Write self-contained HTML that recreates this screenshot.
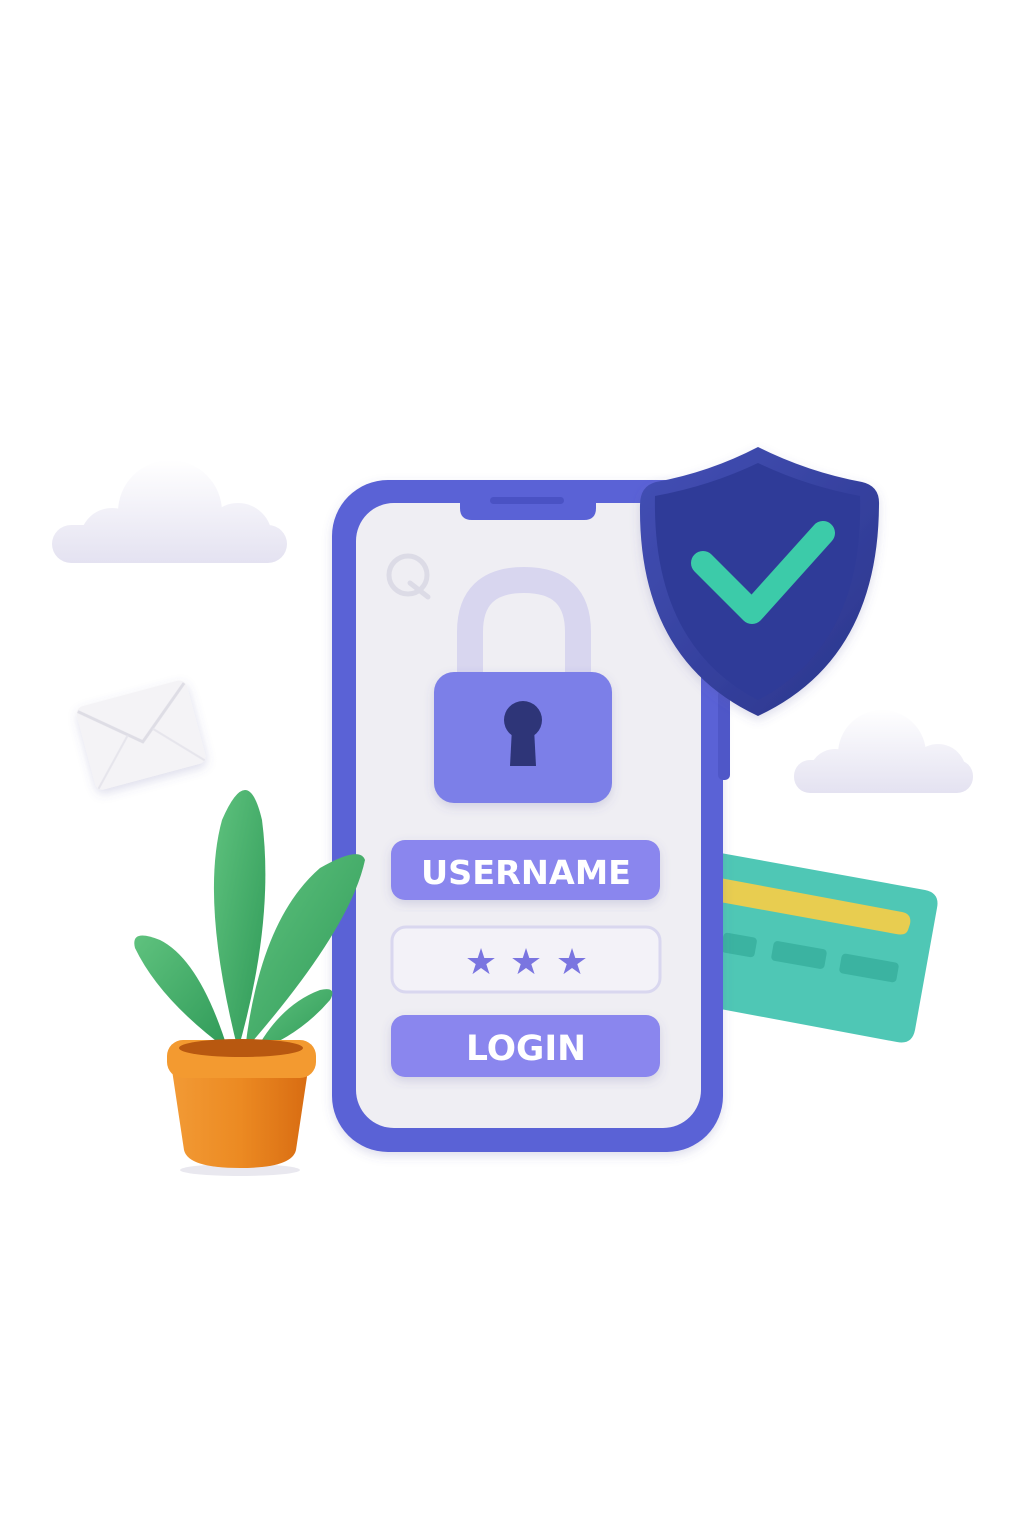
<!DOCTYPE html>
<html><head><meta charset="utf-8"><style>
html,body{margin:0;padding:0;background:#fff;width:1024px;height:1536px;overflow:hidden}
svg{display:block}
</style></head><body>
<svg width="1024" height="1536" viewBox="0 0 1024 1536" xmlns="http://www.w3.org/2000/svg">
<defs>
<linearGradient id="cl1" gradientUnits="userSpaceOnUse" x1="0" y1="460" x2="0" y2="563"><stop offset="0" stop-color="#ffffff"/><stop offset="1" stop-color="#e4e2f1"/></linearGradient>
<linearGradient id="cl2" gradientUnits="userSpaceOnUse" x1="0" y1="708" x2="0" y2="793"><stop offset="0" stop-color="#ffffff"/><stop offset="1" stop-color="#e4e2f1"/></linearGradient>
<clipPath id="c1"><rect x="0" y="0" width="1024" height="563"/></clipPath>
<clipPath id="c2"><rect x="0" y="0" width="1024" height="793"/></clipPath>
<linearGradient id="sh" x1="0" y1="0" x2="1" y2="1"><stop offset="0" stop-color="#4450b6"/><stop offset="1" stop-color="#29348a"/></linearGradient>
<linearGradient id="pot" x1="0" y1="0" x2="1" y2="0"><stop offset="0" stop-color="#f29a35"/><stop offset="0.5" stop-color="#ec8a22"/><stop offset="1" stop-color="#d86c12"/></linearGradient>
<linearGradient id="lf" x1="0" y1="0" x2="1" y2="1"><stop offset="0" stop-color="#5fc27e"/><stop offset="1" stop-color="#2f9a58"/></linearGradient>
<filter id="ds" x="-20%" y="-20%" width="140%" height="140%"><feDropShadow dx="0" dy="4" stdDeviation="5" flood-color="#5a5aa0" flood-opacity="0.2"/></filter>
</defs>

<!-- clouds -->
<g fill="url(#cl1)" clip-path="url(#c1)">
<circle cx="170" cy="512" r="52"/>
<circle cx="112" cy="540" r="32"/>
<circle cx="238" cy="537" r="34"/>
<rect x="52" y="525" width="235" height="38" rx="19"/>
</g>
<g fill="url(#cl2)" clip-path="url(#c2)">
<circle cx="882" cy="754" r="44"/>
<circle cx="835" cy="775" r="26"/>
<circle cx="938" cy="772" r="28"/>
<rect x="794" y="760" width="179" height="33" rx="16"/>
</g>

<!-- envelope -->
<g transform="rotate(-15 141 735)" filter="url(#ds)">
<rect x="84" y="692" width="114" height="86" rx="8" fill="#f4f3f6"/>
<path d="M86 696 L141 742 L196 696" fill="none" stroke="#dedde5" stroke-width="3"/>
<path d="M86 776 L128 732 M196 776 L154 732" fill="none" stroke="#e6e5ec" stroke-width="2"/>
</g>

<!-- card -->
<path d="M715 852 L925 890 Q940 893 937 908 L915 1030 Q912 1045 897 1042 L715 1008 Z" fill="#4fc7b5"/>
<path d="M720 878 L902 912 Q912 914 910 924 L908 930 Q906 936 896 934 L720 902 Z" fill="#e8cd50"/>
<rect x="772" y="945" width="54" height="20" rx="4" transform="rotate(10 799 955)" fill="#3bb3a1"/>
<rect x="840" y="958" width="58" height="20" rx="4" transform="rotate(10 869 968)" fill="#3bb3a1"/>
<rect x="722" y="935" width="34" height="20" rx="4" transform="rotate(10 739 945)" fill="#3bb3a1"/>

<!-- phone -->
<rect x="332" y="480" width="391" height="672" rx="56" fill="#5a62d6" filter="url(#ds)"/>
<rect x="718" y="690" width="12" height="90" rx="5" fill="#4f57c8"/>
<rect x="356" y="503" width="345" height="625" rx="38" fill="#efeef3"/>
<path d="M460 503 L596 503 L596 508 Q596 520 584 520 L472 520 Q460 520 460 508 Z" fill="#5a62d6"/>
<rect x="490" y="497" width="74" height="7" rx="3.5" fill="#4a52c4"/>

<!-- Q logo -->
<circle cx="408" cy="575" r="19" fill="none" stroke="#dcdbe6" stroke-width="5"/>
<path d="M410 583 L428 597" stroke="#dcdbe6" stroke-width="5" stroke-linecap="round"/>

<!-- lock -->
<path d="M470 690 L470 632 Q470 580 524 580 Q578 580 578 632 L578 690" fill="none" stroke="#d8d6ef" stroke-width="26"/>
<rect x="434" y="672" width="178" height="131" rx="20" fill="#7c7fe8" filter="url(#ds)"/>
<circle cx="523" cy="720" r="19" fill="#2e3578"/>
<path d="M512 728 L534 728 L536 766 L510 766 Z" fill="#2e3578"/>

<!-- buttons -->
<rect x="391" y="840" width="269" height="60" rx="14" fill="#8a86ee" filter="url(#ds)"/>
<text x="526" y="884" text-anchor="middle" font-family="DejaVu Sans, sans-serif" font-weight="bold" font-size="33" fill="#fff" textLength="210" lengthAdjust="spacingAndGlyphs">USERNAME</text>
<rect x="392" y="927" width="268" height="65" rx="14" fill="#f3f2f8" stroke="#d9d7ef" stroke-width="3"/>
<g fill="#7a75e0" font-family="DejaVu Sans, sans-serif" font-size="36" text-anchor="middle">
<text x="481" y="974">★</text><text x="526" y="974">★</text><text x="572" y="974">★</text>
</g>
<rect x="391" y="1015" width="269" height="62" rx="14" fill="#8a86ee" filter="url(#ds)"/>
<text x="526" y="1060" text-anchor="middle" font-family="DejaVu Sans, sans-serif" font-weight="bold" font-size="35" fill="#fff" textLength="120" lengthAdjust="spacingAndGlyphs">LOGIN</text>

<!-- shield -->
<path d="M758 447 Q808 472 862 482 Q880 486 879 505 Q878 660 758 716 Q638 660 640 505 Q640 486 656 482 Q710 472 758 447 Z" fill="url(#sh)" filter="url(#ds)"/>
<path d="M758 463 Q806 486 860 496 Q864 645 758 700 Q652 645 655 496 Q710 486 758 463 Z" fill="#2f3b98"/>
<path d="M703 563 L752 612 L823 533" fill="none" stroke="#3ccba9" stroke-width="24" stroke-linecap="round" stroke-linejoin="round"/>

<!-- plant -->
<path d="M238 1050 Q200 900 222 820 Q248 760 262 820 Q275 920 238 1050 Z" fill="url(#lf)"/>
<path d="M245 1050 Q260 920 320 868 Q360 845 365 860 Q350 930 245 1050 Z" fill="url(#lf)"/>
<path d="M228 1050 Q200 960 160 940 Q130 928 135 948 Q160 1000 228 1050 Z" fill="url(#lf)"/>
<path d="M255 1052 Q280 1005 320 990 Q338 986 330 1000 Q300 1035 255 1052 Z" fill="url(#lf)"/>
<ellipse cx="240" cy="1170" rx="60" ry="6" fill="#e9e8ef"/>
<path d="M172 1070 L308 1070 L296 1150 Q292 1168 240 1168 Q188 1168 184 1150 Z" fill="url(#pot)"/>
<rect x="167" y="1040" width="149" height="38" rx="16" fill="#f39a30"/>
<ellipse cx="241" cy="1048" rx="62" ry="9" fill="#b85810"/>
</svg>
</body></html>
